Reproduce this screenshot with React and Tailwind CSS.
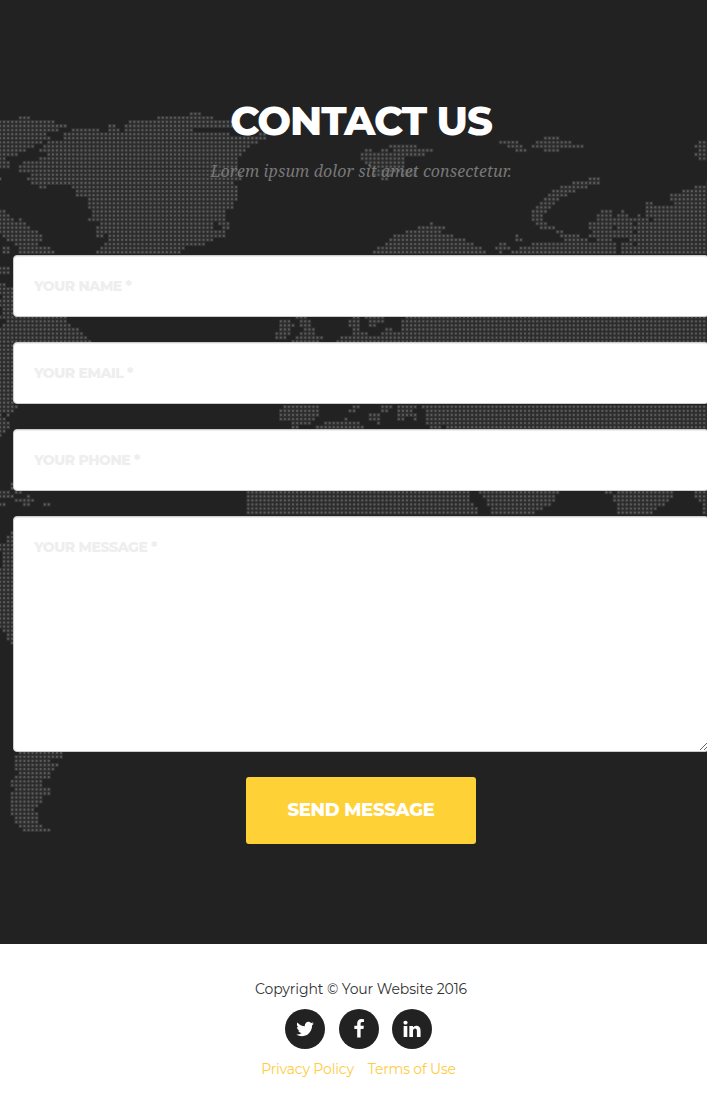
const PITCH = 4.07;
const ORIGIN_X = -0.2;
const ORIGIN_Y = 113.8;
const END = 709;

// Each key is a dot row; its value lists [from, to] spans in pixels.
const MAP_ROWS = {
  0: [[190, 200]],
  1: [[20, 29], [158, 212]],
  2: [[0, 53], [130, 232]],
  3: [[0, 65], [109, 115], [125, 232]],
  4: [[0, 57], [73, 98], [109, 118], [126, 192]],
  5: [[0, 45], [65, 228], [262, 265]],
  6: [[0, 49], [65, 265], [545, 558]],
  7: [[0, 41], [48, 257], [500, 517], [537, 570], [699, END]],
  8: [[0, 33], [44, 249], [390, 416], [508, 521], [533, 582], [695, END]],
  9: [[0, 25], [40, 245], [366, 372], [382, 387], [394, 432], [516, 525], [545, 558], [699, END]],
  10: [[0, 17], [48, 241], [362, 424], [695, END]],
  11: [[0, 5], [40, 237], [362, 403], [699, END]],
  12: [[0, 9], [24, 237], [366, 403]],
  13: [[0, 9], [20, 237], [370, 403]],
  14: [[20, 237], [373, 416]],
  15: [[32, 241], [376, 390], [402, 413]],
  16: [[0, 0], [28, 241], [382, 387], [589, 598]],
  17: [[32, 233], [573, 598], [707, END]],
  18: [[40, 45], [73, 237], [561, 587], [695, END]],
  19: [[77, 237], [553, 574], [683, END]],
  20: [[77, 237], [549, 566], [671, END]],
  21: [[89, 237], [545, 558], [671, END]],
  22: [[89, 233], [541, 554], [647, 651], [675, END]],
  23: [[89, 233], [537, 550], [647, END]],
  24: [[0, 5], [93, 225], [533, 546], [602, 610], [622, 622], [647, END]],
  25: [[0, 9], [93, 225], [533, 542], [597, 610], [618, 627], [638, 638], [647, END]],
  26: [[0, 13], [20, 20], [89, 225], [533, 542], [597, 614], [618, 647], [655, END]],
  27: [[0, 25], [101, 213], [219, 229], [431, 431], [537, 546], [589, 614], [618, 631], [638, END]],
  28: [[0, 29], [97, 213], [222, 229], [419, 444], [541, 554], [589, 610], [618, END]],
  29: [[0, 37], [97, 225], [406, 440], [557, 562], [593, 614], [618, 631], [638, END]],
  30: [[3, 41], [97, 102], [109, 225], [394, 452], [516, 516], [561, 578], [589, 614], [618, END]],
  31: [[7, 41], [109, 213], [390, 465], [516, 521], [565, 587], [597, 610], [631, END]],
  32: [[16, 37], [105, 204], [386, 473], [500, 505], [533, 614], [622, 631], [638, END]],
  33: [[3, 9], [20, 49], [101, 184], [378, 481], [496, 508], [520, 614], [622, END]],
  34: [[3, 9], [20, 53], [97, 180], [374, 485], [500, 500], [512, 614], [622, END]],
  38: [[0, 9]],
  39: [[0, 9]],
  42: [[0, 5]],
  43: [[0, 13]],
  44: [[0, 13]],
  45: [[4, 13]],
  46: [[0, 13]],
  47: [[0, 13]],
  48: [[4, 13]],
  49: [[4, 13]],
  50: [[0, 66], [296, 305], [353, 358], [365, 383], [407, END]],
  51: [[7, 66], [280, 289], [300, 310], [349, 358], [369, 383], [402, END]],
  52: [[3, 70], [280, 293], [300, 310], [349, 358], [369, 375], [402, END]],
  53: [[0, 78], [280, 289], [304, 314], [353, 358], [386, 391], [402, END]],
  54: [[0, 82], [276, 289], [300, 314], [353, 367], [382, END]],
  55: [[0, 86], [276, 285], [296, 322], [341, END]],
  56: [[0, 90], [292, 318], [337, END]],
  72: [[0, 16], [284, 318], [353, 358], [382, 390], [398, 415], [423, END]],
  73: [[0, 12], [280, 318], [349, 354], [382, 387], [398, 411], [427, END]],
  74: [[0, 0], [7, 7], [280, 318], [369, 378], [398, 415], [427, END]],
  75: [[0, 5], [280, 314], [345, 345], [369, 378], [398, 403], [414, 414], [427, END]],
  76: [[0, 9], [292, 310], [325, 358], [377, 377], [427, END]],
  77: [[0, 9], [292, 297], [317, 362], [431, 440], [447, END]],
  78: [[0, 5]],
  79: [[0, 0]],
  91: [[12, 12]],
  92: [[12, 12]],
  93: [[0, 9], [16, 21], [248, 469], [480, 557], [605, 610], [618, 671], [695, END]],
  94: [[0, 13], [28, 28], [248, 469], [484, 554], [614, 671], [695, END]],
  95: [[16, 33], [248, 469], [488, 554], [614, 667], [699, END]],
  96: [[0, 5], [24, 29], [44, 50], [248, 472], [488, 549], [618, 662], [703, END]],
  97: [[248, 476], [491, 541], [618, 656], [703, END]],
  98: [[248, 476], [491, 533], [618, 651], [703, END]],
  103: [[12, 12]],
  104: [[7, 13]],
  105: [[7, 13]],
  106: [[0, 13]],
  107: [[0, 13]],
  108: [[4, 13]],
  109: [[4, 13]],
  110: [[4, 13]],
  111: [[4, 13]],
  127: [[4, 13]],
  128: [[7, 13]],
  129: [[7, 13]],
  130: [[12, 12]],
  157: [[20, 61]],
  158: [[16, 61]],
  159: [[16, 50]],
  160: [[16, 57]],
  161: [[16, 53]],
  162: [[20, 50]],
  163: [[16, 50]],
  164: [[12, 41]],
  165: [[12, 41]],
  166: [[16, 50]],
  167: [[12, 50]],
  168: [[12, 41]],
  169: [[12, 41]],
  170: [[12, 37]],
  171: [[12, 33]],
  172: [[12, 37]],
  173: [[16, 37]],
  174: [[16, 37]],
  175: [[20, 41]],
  176: [[24, 49]],
};
for (let r = 57; r <= 71; r++) MAP_ROWS[r] = [[0, 13]];
for (let r = 112; r <= 126; r++) MAP_ROWS[r] = [[0, 13]];

const dots = Object.entries(MAP_ROWS)
  .flatMap(([row, spans]) =>
    spans.flatMap(([from, to]) => {
      const first = Math.round((from - ORIGIN_X) / PITCH);
      const last = Math.round((to - ORIGIN_X) / PITCH);
      const y = (ORIGIN_Y + row * PITCH).toFixed(2);
      return Array.from({ length: last - first + 1 }, (_, i) => `M${(ORIGIN_X + 0.2 + (first + i) * PITCH).toFixed(2)} ${y}h0`);
    })
  )
  .join("");

function WorldMap() {
  return (
    <svg className="absolute inset-0 h-full w-full" aria-hidden="true">
      <path d={dots} fill="none" stroke="#333333" strokeWidth="3.8" strokeLinecap="square" />
      <path d={dots} fill="none" stroke="#5a5a5a" strokeWidth="2.3" strokeLinecap="round" />
    </svg>
  );
}

const field =
  "block w-full rounded-[4px] border border-[#ccc] bg-white px-5 text-[14px] font-extrabold tracking-[-0.42px] text-[#222] shadow-[inset_0_1px_1px_rgba(0,0,0,0.075)] outline-none placeholder:text-[#eee] placeholder:opacity-100";

const socials = [
  {
    name: "Twitter",
    path: "M1684 408q-67 98-162 167 1 14 1 42 0 130-38 259.500t-115.500 248.500-184.500 210.500-258 146-323 54.500q-271 0-496-145 35 4 78 4 225 0 401-138-105-2-188-64.500t-114-159.500q33 5 61 5 43 0 85-11-112-23-185.500-111.500t-73.500-205.500v-4q68 38 146 41-66-44-105-115t-39-154q0-88 44-163 121 149 294.500 238.500t371.500 99.500q-8-38-8-74 0-134 94.500-228.500t228.500-94.500q140 0 236 102 109-21 205-78-37 115-142 178 93-10 186-50z",
  },
  {
    name: "Facebook",
    path: "M1343 12v264h-157q-86 0-116 36t-30 108v189h293l-39 296h-254v759h-306v-759h-255v-296h255v-218q0-186 104-288.500t277-102.500q147 0 228 12z",
  },
  {
    name: "LinkedIn",
    path: "M477 625v991h-330v-991h330zm21-306q1 73-50.500 122t-135.500 49h-2q-82 0-132-49t-50-122q0-74 51.500-122.500t134.500-48.500 133 48.500 51 122.500zm1166 729v568h-329v-530q0-105-40.500-164.500t-126.500-59.500q-63 0-105.500 34.500t-64.500 85.500q-11 30-11 81v553h-329q2-399 2-647t-1-296l-1-48h329v144h-2q20-32 41-56t56.500-52 87-43.500 114.500-15.500q171 0 275 113.500t104 332.500z",
  },
];

export default function App() {
  return (
    <div className="h-[1114px] w-full overflow-hidden bg-white font-['Montserrat','Inter',sans-serif]">
      <section className="relative h-[944px] overflow-hidden bg-[#222]">
        <WorldMap />
        <div className="relative flex w-[722px] flex-col items-center pt-[99px]">
          <h2 className="h-[44px] text-[40px] leading-[44px] font-extrabold tracking-[-1.1px] whitespace-nowrap text-white">CONTACT US</h2>
          <p className="mt-[15px] h-[26px] font-['Droid_Serif','Noto_Serif','Liberation_Serif',serif] text-[16px] leading-[26px] tracking-[0.08px] whitespace-nowrap text-[#777] italic">
            Lorem ipsum dolor sit amet consectetur.
          </p>
          <form className="mt-[71px] flex w-[696px] flex-col items-center gap-[25px]">
            <input className={`${field} h-[62px]`} placeholder="YOUR NAME *" />
            <input className={`${field} h-[62px]`} placeholder="YOUR EMAIL *" />
            <input className={`${field} h-[62px]`} placeholder="YOUR PHONE *" />
            <textarea className={`${field} h-[236px] py-5 leading-5`} placeholder="YOUR MESSAGE *" />
            <button type="button" className="h-[67px] w-[230px] rounded-[3px] bg-[#fed136] text-[18px] font-extrabold tracking-[-0.3px] whitespace-nowrap text-white">
              SEND MESSAGE
            </button>
          </form>
        </div>
      </section>
      <footer className="flex w-[722px] flex-col items-center pt-[25px]">
        <span className="text-[14px] leading-10 tracking-[-0.1px] whitespace-nowrap text-[#333]">Copyright © Your Website 2016</span>
        <div className="mr-[5px] flex gap-[13.5px]">
          {socials.map(({ name, path }) => (
            <a key={name} aria-label={name} className="flex size-10 items-center justify-center rounded-full bg-[#222] text-white">
              <svg viewBox="0 0 1792 1792" className="size-5" fill="currentColor">
                <path d={path} />
              </svg>
            </a>
          ))}
        </div>
        <div className="mr-[5px] flex gap-[14px] text-[14px] leading-10 tracking-[-0.18px] whitespace-nowrap text-[#fecd3f]">
          <a>Privacy Policy</a>
          <a>Terms of Use</a>
        </div>
      </footer>
    </div>
  );
}
